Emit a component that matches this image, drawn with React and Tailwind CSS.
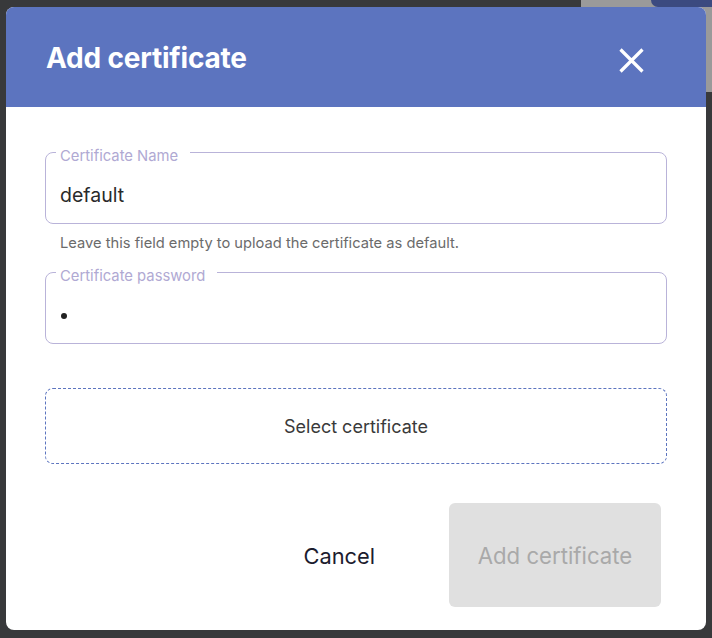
import React from 'react';

const font = { fontFamily: 'Inter, "Noto Sans", sans-serif' };

function OutlinedField({ label, children }) {
  return (
    <div className="relative h-[72px] rounded-lg border border-[#b9b3d9]">
      <span className="absolute left-[10px] top-[-5px] bg-white pl-[4px] pr-[12px] text-[14.8px] leading-[16px] text-[#b0a9d3]">
        {label}
      </span>
      {children}
    </div>
  );
}

function CloseIcon() {
  return (
    <svg width="25" height="25" viewBox="0 0 25 25" fill="none">
      <path d="M1.5 1.5L23.5 23.5M23.5 1.5L1.5 23.5" stroke="white" strokeWidth="3.2" />
    </svg>
  );
}

export default function App() {
  return (
    <div className="relative h-[638px] w-[712px] overflow-hidden bg-[#38393b]" style={font}>
      {/* dimmed page behind the overlay */}
      <div className="absolute right-0 top-0 h-[92px] w-[131px] bg-[#9a9a9a]">
        <div className="absolute right-0 top-0 h-[7px] w-[61px] rounded-bl-[10px] bg-[#3b4a80]" />
      </div>

      <div className="absolute left-[6px] top-[7px] flex h-[623px] w-[700px] flex-col overflow-hidden rounded-lg bg-white">
        <header className="flex h-[100px] shrink-0 items-center justify-between bg-[#5c74bf] pl-[40px] pr-[62px]">
          <h1 className="mt-[1px] text-[28px] font-bold tracking-[-0.2px] text-white">Add certificate</h1>
          <button type="button" aria-label="Close" className="mt-[6px] flex h-[25px] w-[25px] items-center justify-center">
            <CloseIcon />
          </button>
        </header>

        <div className="flex flex-1 flex-col px-[39px] pt-[45px]">
          <OutlinedField label="Certificate Name">
            <div className="pl-[14px] pt-[31px] text-[19.5px] leading-[22px] text-[#2a2a2a]">default</div>
          </OutlinedField>
          <p className="mt-[11px] pl-[15px] text-[14.7px] leading-[16px] text-[#6b6b6b]">
            Leave this field empty to upload the certificate as default.
          </p>

          <div className="mt-[21px]">
            <OutlinedField label="Certificate password">
              <span className="absolute left-[15px] top-[40px] block h-[6px] w-[6px] rounded-full bg-[#222]" />
            </OutlinedField>
          </div>

          <button
            type="button"
            className="mt-[44px] flex h-[76px] w-full shrink-0 items-center justify-center rounded-lg border border-dashed border-[#5c74bf] text-[18px] text-[#3a3a3a]"
          >
            Select certificate
          </button>

          <div className="mt-[39px] flex items-center justify-end gap-[74px] pr-[6px]">
            <button type="button" className="mt-[2px] text-[21.8px] text-[#1c1c2e]">
              Cancel
            </button>
            <button
              type="button"
              disabled
              className="flex h-[104px] w-[212px] items-center justify-center rounded-md bg-[#e0e0e0] pt-[2px] text-[22.2px] text-[#a9a9a9]"
            >
              Add certificate
            </button>
          </div>
        </div>
      </div>
    </div>
  );
}
